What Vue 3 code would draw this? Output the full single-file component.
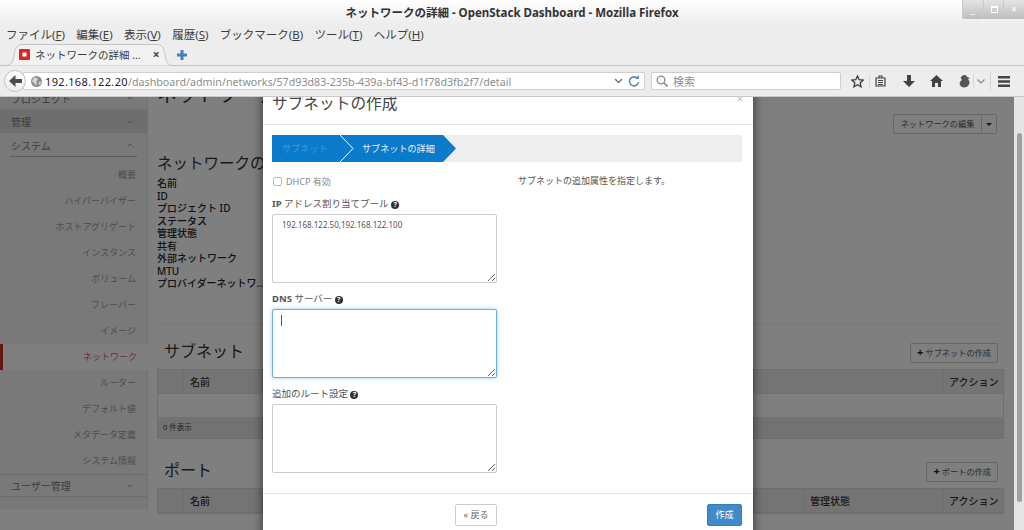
<script setup>
const menus = [
  ['ファイル(', 'F', ')'],
  ['編集(', 'E', ')'],
  ['表示(', 'V', ')'],
  ['履歴(', 'S', ')'],
  ['ブックマーク(', 'B', ')'],
  ['ツール(', 'T', ')'],
  ['ヘルプ(', 'H', ')']
]

const sysItems = [
  '概要',
  'ハイパーバイザー',
  'ホストアグリゲート',
  'インスタンス',
  'ボリューム',
  'フレーバー',
  'イメージ',
  'ネットワーク',
  'ルーター',
  'デフォルト値',
  'メタデータ定義',
  'システム情報'
]

const details = ['名前', 'ID', 'プロジェクト ID', 'ステータス', '管理状態', '共有', '外部ネットワーク', 'MTU', 'プロバイダーネットワ...']

const poolValue = '192.168.122.50,192.168.122.100'
</script>

<template>
  <div class="window">
    <!-- title bar -->
    <div class="titlebar">
      <span class="wintitle">ネットワークの詳細 - OpenStack Dashboard - Mozilla Firefox</span>
      <div class="winbtns">
        <span class="wb">_</span>
        <span class="wb wb-max"></span>
        <span class="wb">×</span>
      </div>
    </div>

    <div class="menubar">
      <span v-for="m in menus" :key="m[1]" class="menu">{{ m[0] }}<u>{{ m[1] }}</u>{{ m[2] }}</span>
    </div>

    <div class="tabbar">
      <div class="tab">
        <svg class="tab-bg" width="168" height="22" viewBox="0 0 168 22">
          <path d="M0 21.5C6 21.5 7 17 8 11C9 4 11 .5 17 .5H150C156 .5 158 4 159 11C160 17 161 21.5 167 21.5" fill="#f2f2f2" stroke="#c4c4c4" />
        </svg>
        <svg class="favicon" width="11" height="11" viewBox="0 0 11 11">
          <rect width="11" height="11" rx="1" fill="#d9262b" />
          <rect x="3.500" y="3.500" width="4" height="4" fill="#fff" />
        </svg>
        <span class="tab-text">ネットワークの詳細 ...</span>
        <span class="tab-close">×</span>
      </div>
      <svg class="newtab" width="10" height="10" viewBox="0 0 10 10">
        <path d="M3.5 0h3v3.5H10v3H6.500V10h-3V6.500H0v-3h3.500z" fill="#4a7fb5" />
      </svg>
    </div>

    <div class="navbar">
      <div class="back">
        <svg width="13" height="12" viewBox="0 0 13 12"><path d="M6.500 0L0 6l6.500 6V8H13V4H6.500z" fill="#4d4d4d" /></svg>
      </div>
      <div class="urlbar">
        <svg class="globe" width="11" height="11" viewBox="0 0 11 11">
          <circle cx="5.500" cy="5.500" r="5.500" fill="#8f8f8f" />
          <path d="M3 1.500l3 .5 1 2-2 1 1 2-1 2.500-2-2.500-2-2zM8 6l2-.5-.5 2.500-1.500 1z" fill="#d8d8d8" />
        </svg>
        <span class="url"><span class="host">192.168.122.20</span>/dashboard/admin/networks/57d93d83-235b-439a-bf43-d1f78d3fb2f7/detail</span>
        <svg class="url-ico" width="9" height="6" viewBox="0 0 9 6"><path d="M1 1l3.500 3.500L8 1" fill="none" stroke="#777" stroke-width="1.500" /></svg>
        <svg class="url-ico" width="12" height="12" viewBox="0 0 12 12">
          <path d="M9.500 3.500A4.500 4.500 0 1 0 10.500 7" fill="none" stroke="#6b86a0" stroke-width="1.600" />
          <path d="M7 4h4V0z" fill="#6b86a0" />
        </svg>
      </div>
      <div class="searchbar">
        <svg width="12" height="12" viewBox="0 0 12 12">
          <circle cx="5" cy="5" r="3.800" fill="none" stroke="#8a8a8a" stroke-width="1.300" />
          <path d="M8 8l3.500 3.500" stroke="#8a8a8a" stroke-width="1.600" />
        </svg>
        <span class="search-text">検索</span>
      </div>
      <div class="tools">
        <svg width="13" height="13" viewBox="0 0 13 13"><path d="M6.500 1l1.700 3.700 4 .4-3 2.700.9 4-3.600-2.100-3.600 2.100.9-4-3-2.700 4-.4z" fill="none" stroke="#3c3c3c" stroke-width="1.300" /></svg>
        <span class="tool-sep"></span>
        <svg width="11" height="12" viewBox="0 0 11 12"><path d="M1 3h9v8H1zM4 3V1h3v2M3 5.500h5M3 7.500h5M3 9.500h5" fill="none" stroke="#444" stroke-width="1.200" /></svg>
        <svg class="t-dl" width="12" height="13" viewBox="0 0 12 13"><path d="M4 0h4v6h4l-6 6-6-6h4z" fill="#444" /></svg>
        <svg class="t-home" width="13" height="12" viewBox="0 0 13 12"><path d="M6.500 0L0 6h2v6h3V8h3v4h3V6h2z" fill="#444" /></svg>
        <svg class="t-pocket" width="12" height="14" viewBox="0 0 12 14"><path d="M3 2c2-2 5-1 5 1l3 1-2 1c2 2 2 5 0 7-2 2-7 2-8-1-1-2 0-4 2-5C2 5 1 3 3 2z" fill="#555" /></svg>
        <span class="tool-sep pocket-sep"></span>
        <svg class="t-chev" width="8" height="5" viewBox="0 0 8 5"><path d="M.5.500L4 4 7.500.500" fill="none" stroke="#888" stroke-width="1.200" /></svg>
        <span class="tool-sep burger-sep"></span>
        <svg width="12" height="11" viewBox="0 0 12 11"><path d="M0 0h12v2.500H0zM0 4.200h12v2.500H0zM0 8.400h12v2.500H0z" fill="#444" /></svg>
      </div>
    </div>

    <!-- page content -->
    <div class="viewport">
      <div class="page">
        <aside class="sidebar">
          <div class="side-top">プロジェクト<svg width="6" height="4" viewBox="0 0 6 4"><path d="M.5.500L3 3 5.500.500" fill="none" stroke="#999" /></svg></div>
          <div class="side-head">管理<svg width="6" height="4" viewBox="0 0 6 4"><path d="M.5 3.500L3 1l2.500 2.500" fill="none" stroke="#999" /></svg></div>
          <div class="side-sub"><span>システム</span><svg width="6" height="4" viewBox="0 0 6 4"><path d="M.5 3.500L3 1l2.500 2.500" fill="none" stroke="#999" /></svg></div>
          <a v-for="s in sysItems" :key="s" class="side-item" :class="{ active: s === 'ネットワーク' }">{{ s }}</a>
          <div class="side-user">ユーザー管理<svg width="6" height="4" viewBox="0 0 6 4"><path d="M.5.500L3 3 5.500.500" fill="none" stroke="#999" /></svg></div>
        </aside>

        <main class="main">
          <div class="page-head">
            <h1>ネットワーク</h1>
            <div class="edit-group">
              <span class="btn edit-main">ネットワークの編集</span>
              <span class="btn edit-drop"><i class="tri"></i></span>
            </div>
          </div>

          <h3 class="overview">ネットワークの概要</h3>
          <dl class="dl">
            <dt v-for="d in details" :key="d">{{ d }}</dt>
          </dl>
          <hr class="rule" />

          <div class="sect-head">
            <h3>サブネット</h3>
            <span class="btn add-btn"><b>+</b> サブネットの作成</span>
          </div>
          <div class="tbl">
            <div class="tbl-head">
              <span class="col-check"></span>
              <span class="col-name">名前</span>
              <span class="col-act">アクション</span>
            </div>
            <div class="tbl-row"></div>
            <div class="tbl-foot">0 件表示</div>
          </div>

          <div class="sect-head port-head">
            <h3>ポート</h3>
            <span class="btn add-btn"><b>+</b> ポートの作成</span>
          </div>
          <div class="tbl">
            <div class="tbl-head">
              <span class="col-check"></span>
              <span class="col-name">名前</span>
              <span class="col-state">管理状態</span>
              <span class="col-act">アクション</span>
            </div>
          </div>
        </main>
      </div>

      <div class="scrollbar"><div class="thumb"></div></div>

      <div class="backdrop"></div>

      <!-- modal dialog -->
      <div class="modal">
        <div class="modal-head">
          <h2>サブネットの作成</h2>
          <span class="modal-x">×</span>
        </div>

        <div class="modal-body">
          <div class="steps">
            <div class="step step-done">サブネット</div>
            <svg class="step-chev" width="16" height="27" viewBox="0 0 16 27">
              <path d="M1 0l13 13.500L1 27" fill="none" stroke="#fff" stroke-width="1" />
            </svg>
            <div class="step step-on">サブネットの詳細</div>
            <svg class="step-tip" width="14" height="27" viewBox="0 0 14 27">
              <path d="M0 0l13 13.500L0 27z" fill="#0a7acb" />
            </svg>
          </div>

          <div class="cols">
            <div class="form">
              <label class="check"><input type="checkbox" /> DHCP 有効</label>

              <div class="lbl"><b>IP</b> アドレス割り当てプール <i class="help">?</i></div>
              <textarea class="ta" readonly :value="poolValue"></textarea>

              <div class="lbl"><b>DNS</b> サーバー <i class="help">?</i></div>
              <div class="ta-wrap">
                <textarea class="ta focus" readonly></textarea>
                <span class="cursor"></span>
              </div>

              <div class="lbl">追加のルート設定 <i class="help">?</i></div>
              <textarea class="ta" readonly></textarea>
            </div>
            <p class="desc">サブネットの追加属性を指定します。</p>
          </div>
        </div>

        <div class="modal-foot">
          <span class="btn-back">« 戻る</span>
          <span class="btn-create">作成</span>
        </div>
      </div>
    </div>
  </div>
</template>

<style>
html, body {
  margin: 0;
  background: #ededed;
}
</style>

<style scoped>
.window {
  width: 1024px;
  height: 530px;
  display: flex;
  flex-direction: column;
  overflow: hidden;
  font-family: "Noto Sans", "Noto Sans CJK JP", sans-serif;
  background: #ededed;
  color: #333;
}

.titlebar {
  height: 24px;
  flex-shrink: 0;
  display: flex;
  justify-content: center;
  align-items: center;
  background: linear-gradient(#fff, #ededed);
  position: relative;
}

.wintitle {
  font-size: 11.500px;
  font-weight: 700;
  color: #333;
}

.winbtns {
  position: absolute;
  top: 0;
  right: 0;
  width: 62px;
  height: 19px;
  display: flex;
  background: linear-gradient(#e4e4e4, #bdbdbd);
  border-radius: 0 0 0 4px;
}

.wb {
  flex: 1;
  color: #fff;
  font-size: 10px;
  line-height: 19px;
  text-align: center;
  position: relative;
  border-left: 1px solid #c9c9c9;
}

.wb-max::after {
  content: "";
  position: absolute;
  left: 7px;
  top: 6px;
  width: 5px;
  height: 4px;
  border: 1px solid #fff;
  border-top-width: 2px;
}

.menubar {
  height: 20px;
  flex-shrink: 0;
  display: flex;
  align-items: center;
  gap: 11.400px;
  padding-left: 6px;
  font-size: 11.500px;
  color: #3c3c3c;
}

.tabbar {
  height: 22px;
  flex-shrink: 0;
  display: flex;
  align-items: center;
  padding-left: 6px;
  border-bottom: 1px solid #c4c4c4;
  box-sizing: border-box;
}

.tab {
  width: 167px;
  height: 22px;
  position: relative;
  display: flex;
  align-items: center;
  padding-left: 13px;
  box-sizing: border-box;
}

.tab-bg {
  position: absolute;
  left: 0;
  top: 0;
}

.favicon {
  position: relative;
}

.tab-text {
  position: relative;
  font-size: 10.500px;
  margin-left: 5px;
  color: #3c3c3c;
  white-space: nowrap;
}

.tab-close {
  position: relative;
  font-size: 12px;
  font-weight: 700;
  margin-left: 12px;
  color: #444;
}

.newtab {
  margin-left: 4px;
}

.navbar {
  height: 31px;
  flex-shrink: 0;
  display: flex;
  align-items: center;
  padding: 0 10px 0 4px;
  box-sizing: border-box;
  position: relative;
  border-bottom: 1px solid #c9c9c9;
}

.back {
  width: 22px;
  height: 22px;
  border-radius: 50%;
  border: 1px solid #c4c4c4;
  background: linear-gradient(#fff, #eee);
  box-sizing: border-box;
  display: flex;
  align-items: center;
  justify-content: center;
  position: relative;
  z-index: 1;
  flex-shrink: 0;
}

.urlbar {
  margin-left: -3px;
  width: 622px;
  height: 18px;
  background: #fff;
  border: 1px solid #cfcfcf;
  border-radius: 0 2px 2px 0;
  box-sizing: border-box;
  display: flex;
  align-items: center;
  padding: 0 4px 0 7px;
  flex-shrink: 0;
}

.globe {
  flex-shrink: 0;
}

.url {
  flex: 1;
  margin-left: 3px;
  font-size: 10.700px;
  color: #8e8e8e;
  white-space: nowrap;
  overflow: hidden;
}

.host {
  color: #222;
  font-size: 11px;
  letter-spacing: .35px;
}

.url-ico {
  margin-left: 5px;
}

.searchbar {
  margin-left: 6px;
  width: 190px;
  height: 18px;
  background: #fff;
  border: 1px solid #cfcfcf;
  border-radius: 2px;
  box-sizing: border-box;
  display: flex;
  align-items: center;
  padding-left: 4px;
  flex-shrink: 0;
}

.search-text {
  font-size: 11px;
  color: #8e8e8e;
  margin-left: 5px;
}

.tools {
  flex: 1;
  display: flex;
  align-items: center;
  padding-left: 10px;
}

.tool-sep {
  width: 1px;
  height: 14px;
  background: #d8d8d8;
  margin: 0 5px;
}

.t-dl {
  margin-left: 17px;
}

.t-home {
  margin-left: 15px;
}

.t-pocket {
  margin-left: 16px;
}

.pocket-sep {
  margin: 0 2px 0 2px;
}

.t-chev {
  margin-left: 1px;
}

.burger-sep {
  height: 18px;
  margin: 0 7px 0 5px;
}

.viewport {
  flex: 1;
  position: relative;
  display: flex;
  overflow: hidden;
  background: #fff;
}

.page {
  flex: 1;
  display: flex;
  align-items: flex-start;
  min-width: 0;
}

.sidebar {
  width: 148px;
  flex-shrink: 0;
  margin-top: -10px;
  background: #f2f2f2;
  border-right: 1px solid #e2e2e2;
  box-sizing: border-box;
  font-size: 10px;
  color: #777;
  padding-bottom: 12px;
}

.side-top {
  height: 23px;
  display: flex;
  align-items: center;
  justify-content: space-between;
  padding: 0 14px 0 11px;
  border-bottom: 1px solid #e2e2e2;
  box-sizing: border-box;
}

.side-head {
  height: 23px;
  display: flex;
  align-items: center;
  justify-content: space-between;
  padding: 0 14px 0 11px;
  background: #dcdcdc;
  box-sizing: border-box;
}

.side-sub {
  height: 24px;
  margin: 0 10px 0 10px;
  padding: 1px 4px 0 1px;
  display: flex;
  align-items: center;
  justify-content: space-between;
  border-bottom: 1px solid #bbb;
  box-sizing: border-box;
}

.side-item {
  display: block;
  height: 26px;
  line-height: 26px;
  text-align: right;
  padding-right: 11px;
  color: #999;
  font-size: 9px;
  box-sizing: border-box;
}

.side-item:first-of-type {
  margin-top: 5px;
}

.side-item.active {
  background: #fff;
  color: #d4655c;
  border-left: 3px solid #cd2f27;
  margin-right: -1px;
}

.side-user {
  height: 23px;
  display: flex;
  align-items: center;
  justify-content: space-between;
  padding: 0 14px 0 11px;
  border-top: 1px solid #d8d8d8;
  border-bottom: 1px solid #d8d8d8;
  box-sizing: border-box;
}

.main {
  flex: 1;
  min-width: 0;
  padding: 0 10px 0 9px;
  margin-top: -16px;
}

.page-head {
  display: flex;
  justify-content: space-between;
  align-items: flex-start;
  height: 57px;
}

.page-head h1 {
  margin: 0;
  font-size: 20px;
  font-weight: 400;
  line-height: 28px;
  color: #333;
}

.edit-group {
  display: flex;
  margin-top: 33px;
  margin-right: 7px;
}

.btn {
  display: inline-block;
  background: #fff;
  border: 1px solid #ccc;
  border-radius: 2px;
  font-size: 8.200px;
  color: #555;
  box-sizing: border-box;
}

.edit-main {
  width: 89px;
  height: 20px;
  line-height: 18px;
  text-align: center;
  border-radius: 2px 0 0 2px;
}

.edit-drop {
  width: 16px;
  height: 20px;
  margin-left: -1px;
  border-radius: 0 2px 2px 0;
  display: flex;
  align-items: center;
  justify-content: center;
}

.tri {
  border: 3px solid transparent;
  border-top: 3px solid #333;
  border-bottom: 0;
}

.overview {
  margin: 13px 0 0;
  font-size: 15.500px;
  font-weight: 400;
  line-height: 24px;
  color: #333;
}

.dl {
  margin: 2px 0 0;
}

.dl dt {
  font-size: 10px;
  font-weight: 500;
  line-height: 12.500px;
  color: #222;
}

.rule {
  border: 0;
  border-top: 1px solid #eee;
  margin: 34px 0 0;
}

.sect-head {
  display: flex;
  justify-content: space-between;
  align-items: flex-end;
  height: 44px;
  padding-bottom: 6px;
  padding-right: 6px;
  box-sizing: border-box;
  position: relative;
}

.sect-head h3 {
  margin: 0 0 0 7px;
  font-size: 16px;
  font-weight: 400;
  line-height: 24px;
  color: #333;
}

.port-head {
  height: 49px;
}

.add-btn {
  height: 20px;
  line-height: 18px;
  padding: 0 6px;
}

.add-btn b {
  color: #222;
  font-size: 11px;
  line-height: 10px;
}

.tbl {
  border: 1px solid #ddd;
  background: #fff;
}

.tbl-head {
  height: 24px;
  background: #e8e8e8;
  display: flex;
  align-items: stretch;
  font-size: 10px;
  font-weight: 500;
  line-height: 24px;
  color: #333;
  border-bottom: 1px solid #ddd;
  box-sizing: border-box;
}

.col-check {
  width: 26px;
  border-right: 1px solid #ddd;
  box-sizing: border-box;
}

.col-name {
  flex: 1;
  padding-left: 6px;
}

.col-state {
  width: 140px;
  padding-left: 6px;
  border-left: 1px solid #ddd;
  box-sizing: border-box;
}

.col-act {
  width: 60px;
  padding-left: 5px;
  border-left: 1px solid #ddd;
  box-sizing: border-box;
}

.tbl-row {
  height: 23px;
}

.tbl-foot {
  height: 21px;
  background: #e4e4e4;
  font-size: 7.500px;
  line-height: 21px;
  padding-left: 5px;
  color: #444;
}

.scrollbar {
  width: 10px;
  flex-shrink: 0;
  background: #e6e6e6;
  position: relative;
  z-index: 3;
  display: flex;
  justify-content: center;
  padding-top: 36px;
  box-sizing: border-box;
}

.thumb {
  width: 5px;
  height: 369px;
  border-radius: 3px;
  background: #a0a0a5;
}

.backdrop {
  position: absolute;
  left: 0;
  right: 0;
  top: 0;
  bottom: 0;
  background: rgba(0, 0, 0, .5);
  z-index: 1;
}

.modal {
  position: absolute;
  left: 263px;
  top: -12px;
  width: 490px;
  height: 560px;
  background: #fff;
  z-index: 2;
  box-shadow: 0 0 10px rgba(0, 0, 0, .6);
  font-size: 10px;
  color: #666;
}

.modal-head {
  height: 40px;
  border-bottom: 1px solid #e5e5e5;
  box-sizing: border-box;
  position: relative;
  padding-left: 9px;
}

.modal-head h2 {
  margin: 0;
  font-size: 15.700px;
  font-weight: 400;
  line-height: 36px;
  color: #444;
}

.modal-x {
  position: absolute;
  right: 10px;
  top: 6px;
  font-size: 11px;
  color: #bbb;
}

.modal-body {
  padding: 10px 11px 0 9px;
}

.steps {
  height: 27px;
  background: #eee;
  display: flex;
  align-items: stretch;
}

.step {
  background: #0a7acb;
  line-height: 27px;
  font-size: 9.100px;
  box-sizing: border-box;
}

.step-done {
  width: 67px;
  padding-left: 10px;
  color: #3d9ad9;
}

.step-chev {
  background: #0a7acb;
  flex-shrink: 0;
}

.step-on {
  width: 88px;
  padding-left: 7px;
  color: #e6f2fa;
}

.step-tip {
  flex-shrink: 0;
}

.cols {
  display: flex;
  margin-top: 12px;
}

.form {
  width: 225px;
  flex-shrink: 0;
}

.desc {
  margin: 0 0 0 21px;
  line-height: 14px;
  font-size: 9px;
  color: #555;
}

.check {
  display: flex;
  align-items: center;
  gap: 4px;
  height: 14px;
  font-size: 9px;
  color: #888;
  padding-left: 1px;
}

.check input {
  appearance: none;
  margin: 0;
  width: 9px;
  height: 9px;
  background: #fff;
  border: 1px solid #bbb;
  border-radius: 2px;
  box-sizing: border-box;
}

.lbl {
  font-size: 9.500px;
  height: 14px;
  line-height: 14px;
  color: #555;
  margin-bottom: 3px;
  white-space: nowrap;
}

.check + .lbl {
  margin-top: 9px;
}

.lbl b {
  font-weight: 700;
}

.help {
  display: inline-block;
  width: 8px;
  height: 8px;
  border-radius: 50%;
  background: #333;
  color: #fff;
  font-size: 7px;
  font-style: normal;
  font-weight: 700;
  line-height: 8px;
  text-align: center;
  vertical-align: 0;
}

.ta {
  display: block;
  width: 225px;
  height: 69px;
  margin: 0 0 9px;
  padding: 3px 9px;
  box-sizing: border-box;
  border: 1px solid #ccc;
  border-radius: 2px;
  font-family: "Noto Sans", sans-serif;
  font-size: 8px;
  line-height: 14px;
  color: #555;
  outline: none;
}

.ta.focus {
  border-color: #66afe9;
  box-shadow: 0 0 4px rgba(102, 175, 233, .6);
}

.ta-wrap {
  position: relative;
}

.cursor {
  position: absolute;
  left: 9px;
  top: 6px;
  width: 1px;
  height: 11px;
  background: #555;
}

.modal-foot {
  position: absolute;
  left: 0;
  right: 0;
  top: 408px;
  height: 60px;
  border-top: 1px solid #e5e5e5;
  padding: 10px 11px 0 192px;
  display: flex;
  justify-content: space-between;
  align-items: flex-start;
  box-sizing: border-box;
}

.btn-back {
  width: 42px;
  height: 22px;
  border: 1px solid #ccc;
  border-radius: 2px;
  font-size: 9px;
  line-height: 20px;
  text-align: center;
  color: #666;
  box-sizing: border-box;
}

.btn-create {
  width: 35px;
  height: 22px;
  border-radius: 2px;
  background: #428bca;
  border: 1px solid #357ebd;
  font-size: 9px;
  line-height: 20px;
  text-align: center;
  color: #fff;
  box-sizing: border-box;
}
</style>
